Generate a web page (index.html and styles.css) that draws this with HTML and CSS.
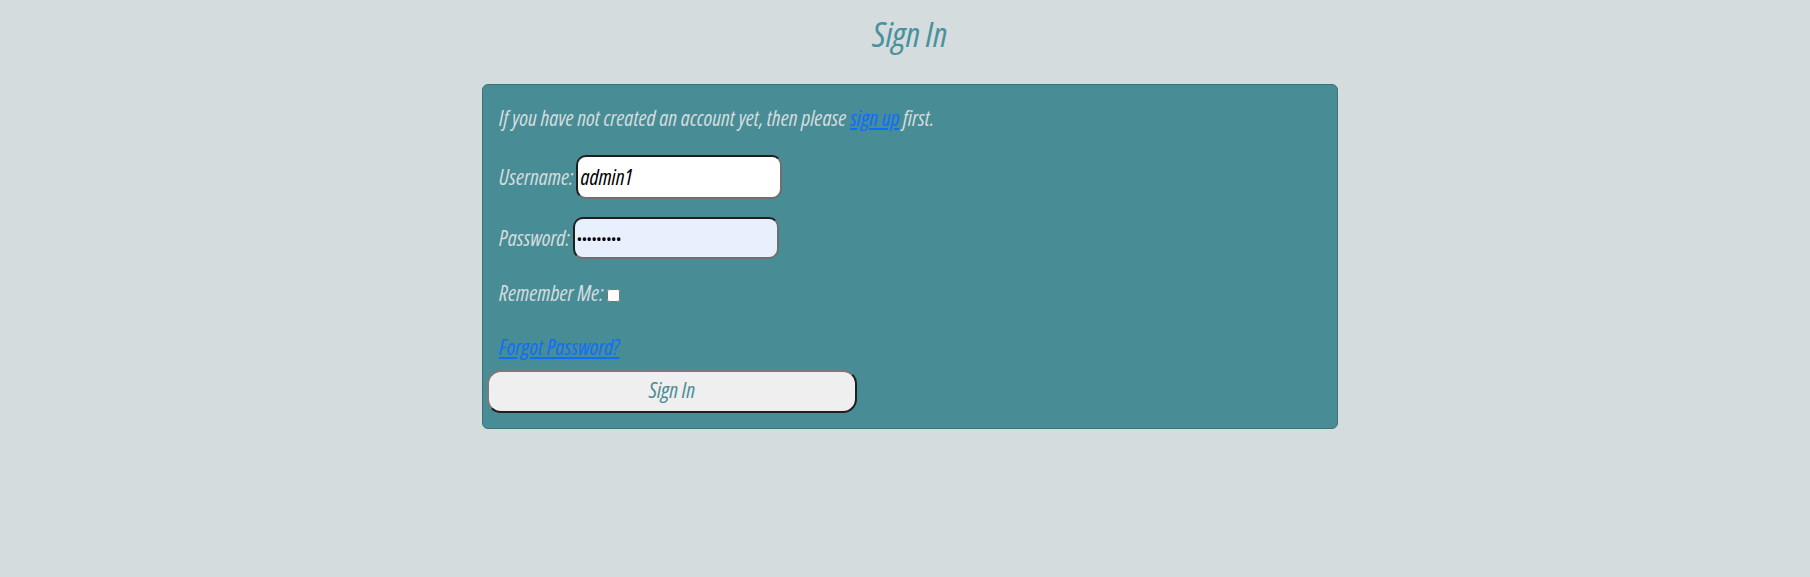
FILE: index.html
```html
<!DOCTYPE html>
<html lang="en">
<head>
<meta charset="utf-8">
<title>Sign In</title>
<link rel="stylesheet" href="styles.css">
</head>
<body>
<div class="page">
  <h1 class="title">Sign In</h1>
  <form class="panel">
    <p class="row intro">If you have not created an account yet, then please&nbsp;<a href="#">sign up</a>&nbsp;first.</p>
    <div class="row field user">
      <label for="u">Username:</label>
      <input id="u" class="box" type="text" value="admin1">
    </div>
    <div class="row field pass">
      <label for="p">Password:</label>
      <input id="p" class="box filled" type="password" value="admin1234">
    </div>
    <div class="row remember">
      <label for="r">Remember Me:</label>
      <input id="r" class="check" type="checkbox">
    </div>
    <div class="row forgot"><a href="#">Forgot Password?</a></div>
    <button class="submit" type="button">Sign In</button>
  </form>
</div>
</body>
</html>
```

FILE: styles.css
```css
html, body {
  margin: 0;
  padding: 0;
  background: #d4dcde;
}

.page {
  padding-left: 10px;
  font-family: "Open Sans", sans-serif;
  font-stretch: 75%;
  font-style: italic;
}

.title {
  margin: 14px 0 0;
  height: 40px;
  line-height: 40px;
  text-align: center;
  font-size: 35px;
  font-weight: 400;
  color: #4a919e;
}

.panel {
  box-sizing: border-box;
  width: 856px;
  margin: 30px auto 0;
  padding: 21px 16px 15px;
  background: #488c96;
  border: 1px solid #3b727a;
  border-radius: 6px;
  color: #d4dcde;
  font-size: 21.7px;
  display: flex;
  flex-direction: column;
  align-items: flex-start;
}

.row {
  box-sizing: border-box;
  margin: 0;
  display: flex;
  align-items: center;
  height: 24px;
}

.intro { display: block; line-height: 24px; }

a { color: #0d6efd; }

.field { gap: 3px; }
.field label { padding-bottom: 2px; }
.user { height: 44px; margin-top: 25px; }
.pass { height: 42px; margin-top: 18px; }
.remember { margin-top: 22px; gap: 3px; }
.remember label { padding-bottom: 2px; }
.forgot { margin-top: 30px; padding-bottom: 2px; }

.box {
  box-sizing: border-box;
  width: 206px;
  height: 100%;
  padding: 0 2px 2px;
  border: 2px solid;
  border-color: #1e1e1e #6f6f6f #6f6f6f #1e1e1e;
  border-radius: 10px;
  background: #ffffff;
  color: #000;
  font-family: "Open Sans", sans-serif;
  font-stretch: 75%;
  font-style: italic;
  font-size: 21.7px;
}

.box.filled { background: #e8f0fe; font-size: 14px; padding: 1px 2px; }

.check {
  width: 13px;
  height: 13px;
  margin: 5px 0 0;
}

.submit {
  box-sizing: border-box;
  width: 370px;
  height: 43px;
  margin: 11px 0 0 -12px;
  padding: 0 0 5px;
  background: #efefef;
  border: 2px solid;
  border-color: #7a7a7a #1f1f1f #1f1f1f #7a7a7a;
  border-radius: 14px;
  color: #4a8d96;
  font-family: "Open Sans", sans-serif;
  font-stretch: 75%;
  font-style: italic;
  font-size: 21.7px;
}
```
